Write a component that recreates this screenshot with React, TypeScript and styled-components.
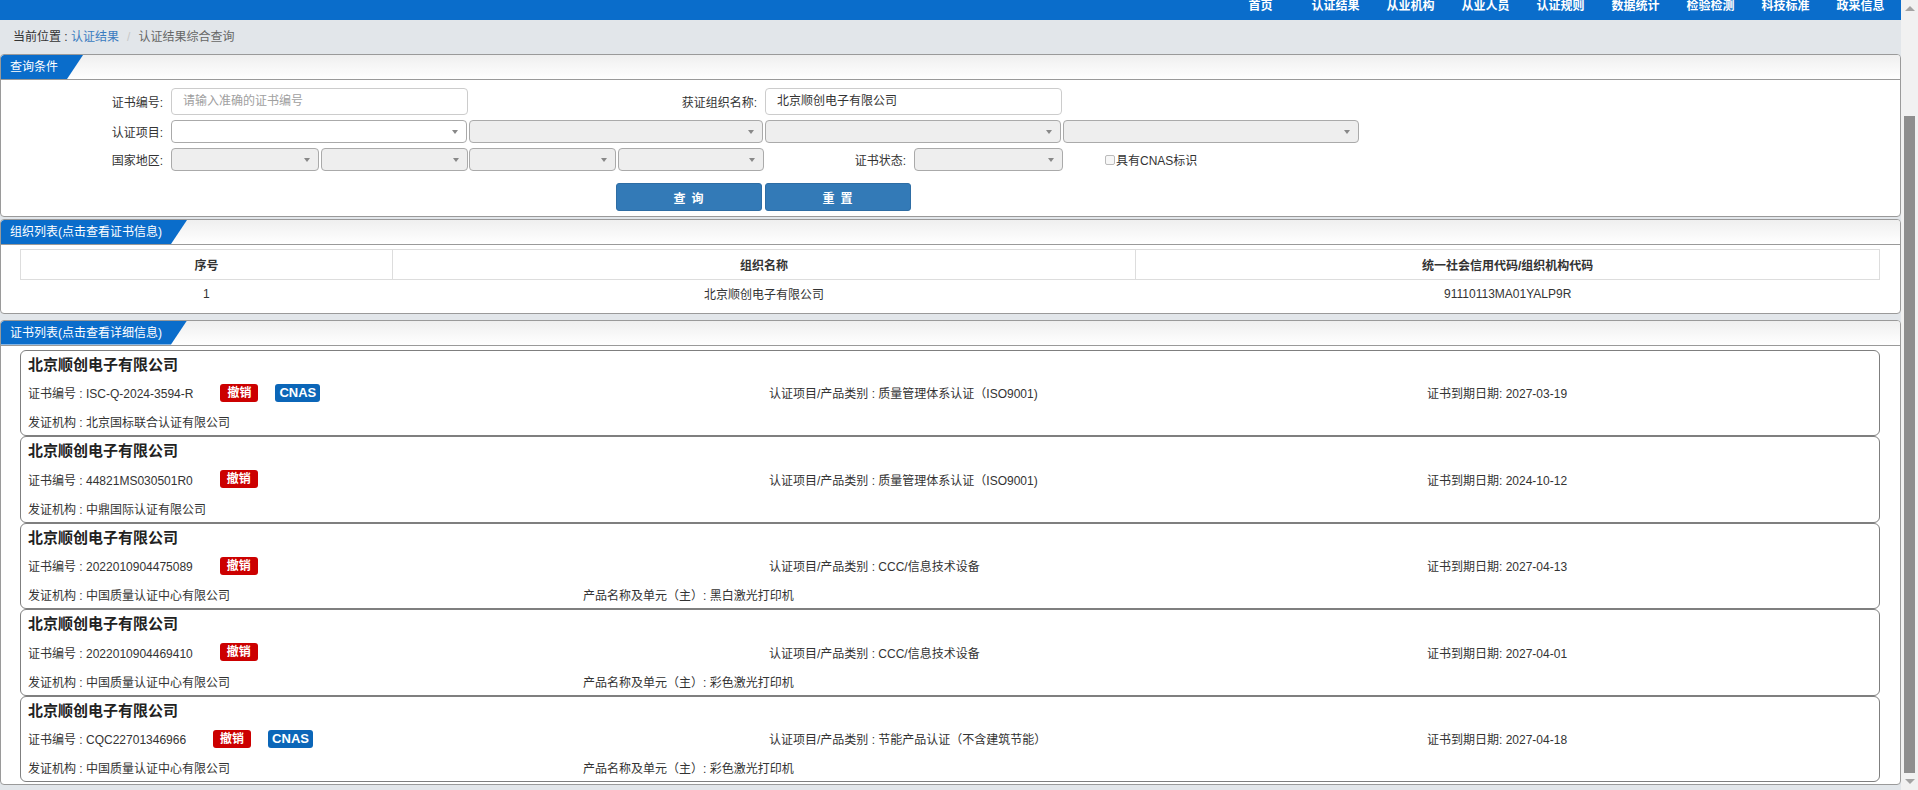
import React from 'react'
import styled, { createGlobalStyle } from 'styled-components'

const GlobalStyle = createGlobalStyle`
  html, body {
    margin: 0;
    padding: 0;
    height: 100%;
    overflow: hidden;
  }
  body {
    background: #e2e6ea;
    font-family: "Liberation Sans", "Noto Sans CJK SC", sans-serif;
    font-size: 12px;
    color: #333;
  }
  * {
    box-sizing: border-box;
  }
`

const Page = styled.div`
  display: flex;
  width: 1918px;
  height: 790px;
`

const Main = styled.div`
  width: 1901px;
  display: flex;
  flex-direction: column;
`

const TopBar = styled.div`
  height: 20px;
  background: #0a6dcb;
  display: flex;
  justify-content: flex-end;
  align-items: flex-start;
  padding-right: 3px;
  overflow: hidden;
`

const NavItem = styled.a`
  width: 75px;
  text-align: center;
  color: #fff;
  font-weight: bold;
  font-size: 12px;
  line-height: 13px;
  text-decoration: none;
`

const Breadcrumb = styled.div`
  height: 34px;
  line-height: 34px;
  padding-left: 13px;
  font-size: 12px;
`

const Crumb = styled.span<{ $tone?: 'link' | 'sep' | 'muted' }>`
  color: ${({ $tone }) =>
    $tone === 'link' ? '#3a7cc0' : $tone === 'sep' ? '#c8c8c8' : $tone === 'muted' ? '#666' : '#333'};
  margin: ${({ $tone }) => ($tone === 'sep' ? '0 8px' : '0')};
`

const Panel = styled.section<{ $mt?: number }>`
  margin-top: ${({ $mt }) => $mt ?? 0}px;
  background: #fff;
  border: 1px solid #9a9a9a;
  border-radius: 4px;
  overflow: hidden;
`

const PanelHead = styled.div`
  height: 25px;
  border-bottom: 1px solid #9a9a9a;
  background: linear-gradient(to bottom, #efefef, #ffffff);
  display: flex;
`

const Tab = styled.div`
  background: #0a6dcb;
  color: #fff;
  font-size: 12px;
  line-height: 24px;
  height: 24px;
  padding: 0 25px 0 9px;
  border-top-left-radius: 3px;
  clip-path: polygon(0 0, 100% 0, calc(100% - 16px) 100%, 0 100%);
`

const Form = styled.div`
  display: grid;
  grid-template-columns: 170px 298px 296px 298px 298px;
  grid-template-rows: 27px 23px 23px 35px;
  row-gap: 5px;
  padding: 8px 0 5px;
  align-items: center;
`

const Label = styled.label`
  text-align: right;
  padding-right: 8px;
  font-size: 12px;
  color: #333;
`

const TextInput = styled.div<{ $placeholder?: boolean }>`
  width: calc(100% - 1px);
  height: 27px;
  border: 1px solid #ccc;
  border-radius: 4px;
  padding: 0 11px;
  line-height: 25px;
  color: ${({ $placeholder }) => ($placeholder ? '#a0a0a0' : '#333')};
  background: #fff;
`

const Select = styled.div<{ $disabled?: boolean; $w?: number }>`
  position: relative;
  width: ${({ $w }) => ($w ? `${$w}px` : 'calc(100% - 2px)')};
  flex: ${({ $w }) => ($w ? 'none' : '1')};
  height: 23px;
  border: 1px solid #aaa;
  border-radius: 4px;
  background: ${({ $disabled }) => ($disabled ? '#eee' : '#fff')};

  &::after {
    content: '';
    position: absolute;
    right: 8px;
    top: 9px;
    border-left: 3px solid transparent;
    border-right: 3px solid transparent;
    border-top: 4px solid #888;
  }
`

const SplitCell = styled.div`
  display: flex;
  gap: 2px;
  padding-right: 1px;
`

const StatusCell = styled.div`
  display: flex;
  align-items: center;
  justify-content: flex-end;
`

const CheckCell = styled.div`
  display: flex;
  align-items: center;
  padding-left: 42px;
  font-size: 12px;
`

const CheckBox = styled.span`
  width: 10px;
  height: 10px;
  border: 1px solid #bbb;
  border-radius: 2px;
  background: #f7f7f7;
  margin-right: 1px;
`

const ButtonRow = styled.div`
  grid-column: 3 / 5;
  align-self: end;
  display: flex;
  justify-content: center;
  gap: 3px;
  padding-right: 6px;
`

const Button = styled.button`
  width: 146px;
  height: 28px;
  background: #337ab7;
  border: 1px solid #2e6da4;
  border-radius: 3px;
  color: #fff;
  font-family: inherit;
  font-size: 12px;
  font-weight: bold;
  letter-spacing: 6px;
  text-indent: 6px;
  cursor: pointer;
`

const Table = styled.table`
  width: 1860px;
  margin: 4px 0 5px 19px;
  border-collapse: collapse;
  font-size: 12px;
`

const Th = styled.th<{ $w: string }>`
  width: ${({ $w }) => $w};
  height: 30px;
  border: 1px solid #ddd;
  font-weight: bold;
  color: #333;
`

const Td = styled.td`
  height: 28px;
  text-align: center;
  color: #333;
`

const CardList = styled.div`
  width: 1860px;
  margin: 4px 0 2px 19px;
`

const Card = styled.div`
  height: 86.5px;
  border: 1px solid #7f7f7f;
  border-radius: 6px;
  padding: 4px 7px 0;
`

const CardTitle = styled.div`
  font-size: 15px;
  font-weight: bold;
  line-height: 20px;
  color: #222;
`

const InfoRow = styled.div<{ $cols: string; $mt: number }>`
  display: grid;
  grid-template-columns: ${({ $cols }) => $cols};
  height: 24px;
  margin-top: ${({ $mt }) => $mt}px;
  align-items: center;
  color: #333;
  font-size: 12px;
`

const CodeCell = styled.div`
  display: flex;
  align-items: center;
`

const Badge = styled.span<{ $kind: 'revoke' | 'cnas' }>`
  display: inline-block;
  height: 18px;
  line-height: 18px;
  padding: 0 ${({ $kind }) => ($kind === 'cnas' ? 4 : 7)}px;
  margin-left: ${({ $kind }) => ($kind === 'cnas' ? 17 : 27)}px;
  border-radius: 3px;
  background: ${({ $kind }) => ($kind === 'cnas' ? '#0b66b8' : '#cc0000')};
  color: #fff;
  font-weight: bold;
  font-size: ${({ $kind }) => ($kind === 'cnas' ? 13 : 12)}px;
`

const ScrollTrack = styled.div`
  width: 17px;
  height: 790px;
  background: #f1f1f1;
  display: flex;
  flex-direction: column;
  align-items: center;
`

const ArrowBox = styled.div<{ $dir: 'up' | 'down' }>`
  height: 17px;
  width: 17px;
  display: flex;
  align-items: center;
  justify-content: center;

  &::before {
    content: '';
    border-left: 5px solid transparent;
    border-right: 5px solid transparent;
    ${({ $dir }) => ($dir === 'up' ? 'border-bottom' : 'border-top')}: 5px solid #a3a3a3;
  }
`

const ThumbSpace = styled.div`
  height: 99px;
`

const Thumb = styled.div`
  flex: 1;
  width: 11px;
  background: #8e8e8e;
`

const navItems = ['首页', '认证结果', '从业机构', '从业人员', '认证规则', '数据统计', '检验检测', '科技标准', '政采信息']

type Cert = {
  code: string
  cnas: boolean
  item: string
  expire: string
  issuer: string
  product?: string
}

const certs: Cert[] = [
  {
    code: 'ISC-Q-2024-3594-R',
    cnas: true,
    item: '质量管理体系认证（ISO9001)',
    expire: '2027-03-19',
    issuer: '北京国标联合认证有限公司',
  },
  {
    code: '44821MS030501R0',
    cnas: false,
    item: '质量管理体系认证（ISO9001)',
    expire: '2024-10-12',
    issuer: '中鼎国际认证有限公司',
  },
  {
    code: '2022010904475089',
    cnas: false,
    item: 'CCC/信息技术设备',
    expire: '2027-04-13',
    issuer: '中国质量认证中心有限公司',
    product: '黑白激光打印机',
  },
  {
    code: '2022010904469410',
    cnas: false,
    item: 'CCC/信息技术设备',
    expire: '2027-04-01',
    issuer: '中国质量认证中心有限公司',
    product: '彩色激光打印机',
  },
  {
    code: 'CQC22701346966',
    cnas: true,
    item: '节能产品认证（不含建筑节能）',
    expire: '2027-04-18',
    issuer: '中国质量认证中心有限公司',
    product: '彩色激光打印机',
  },
]

const App = () => {
  return (
    <Page>
      <GlobalStyle />
      <Main>
        <TopBar>
          {navItems.map((n) => (
            <NavItem key={n}>{n}</NavItem>
          ))}
        </TopBar>
        <Breadcrumb>
          <Crumb>当前位置 : </Crumb>
          <Crumb $tone="link">认证结果</Crumb>
          <Crumb $tone="sep">/</Crumb>
          <Crumb $tone="muted">认证结果综合查询</Crumb>
        </Breadcrumb>

        <Panel>
          <PanelHead>
            <Tab>查询条件</Tab>
          </PanelHead>
          <Form>
            <Label>证书编号:</Label>
            <TextInput $placeholder>请输入准确的证书编号</TextInput>
            <Label>获证组织名称:</Label>
            <TextInput>北京顺创电子有限公司</TextInput>
            <span />

            <Label>认证项目:</Label>
            <Select />
            <Select $disabled />
            <Select $disabled />
            <Select $disabled />

            <Label>国家地区:</Label>
            <SplitCell>
              <Select $disabled />
              <Select $disabled />
            </SplitCell>
            <SplitCell>
              <Select $disabled />
              <Select $disabled />
            </SplitCell>
            <StatusCell>
              <Label>证书状态:</Label>
              <Select $disabled $w={149} />
            </StatusCell>
            <CheckCell>
              <CheckBox />
              具有CNAS标识
            </CheckCell>

            <span />
            <span />
            <ButtonRow>
              <Button>查询</Button>
              <Button>重置</Button>
            </ButtonRow>
          </Form>
        </Panel>

        <Panel $mt={2}>
          <PanelHead>
            <Tab>组织列表(点击查看证书信息)</Tab>
          </PanelHead>
          <Table>
            <thead>
              <tr>
                <Th $w="20%">序号</Th>
                <Th $w="40%">组织名称</Th>
                <Th $w="40%">统一社会信用代码/组织机构代码</Th>
              </tr>
            </thead>
            <tbody>
              <tr>
                <Td>1</Td>
                <Td>北京顺创电子有限公司</Td>
                <Td>91110113MA01YALP9R</Td>
              </tr>
            </tbody>
          </Table>
        </Panel>

        <Panel $mt={6}>
          <PanelHead>
            <Tab>证书列表(点击查看详细信息)</Tab>
          </PanelHead>
          <CardList>
            {certs.map((c) => (
              <Card key={c.code}>
                <CardTitle>北京顺创电子有限公司</CardTitle>
                <InfoRow $cols="741px 658px 1fr" $mt={6}>
                  <CodeCell>
                    证书编号 : {c.code}
                    <Badge $kind="revoke">撤销</Badge>
                    {c.cnas && <Badge $kind="cnas">CNAS</Badge>}
                  </CodeCell>
                  <span>认证项目/产品类别 : {c.item}</span>
                  <span>证书到期日期: {c.expire}</span>
                </InfoRow>
                <InfoRow $cols="555px 1fr" $mt={5}>
                  <span>发证机构 : {c.issuer}</span>
                  <span>{c.product ? `产品名称及单元（主）: ${c.product}` : ''}</span>
                </InfoRow>
              </Card>
            ))}
          </CardList>
        </Panel>
      </Main>
      <ScrollTrack>
        <ArrowBox $dir="up" />
        <ThumbSpace />
        <Thumb />
        <ArrowBox $dir="down" />
      </ScrollTrack>
    </Page>
  )
}

export default App
